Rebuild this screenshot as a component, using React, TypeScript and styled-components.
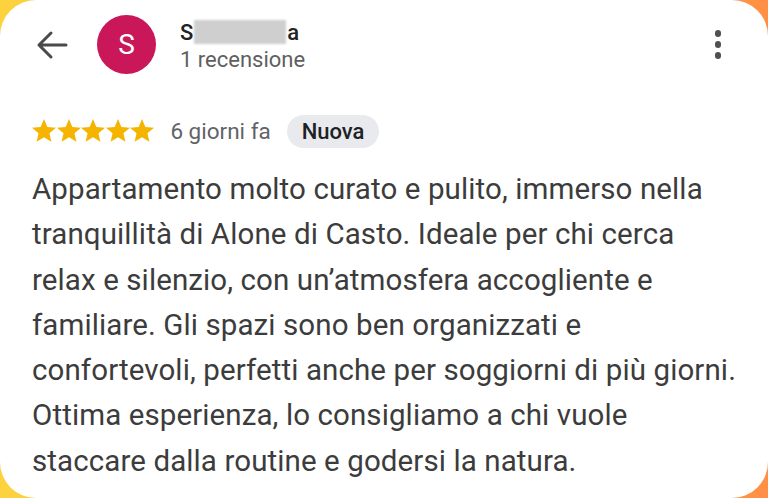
import styled, { createGlobalStyle } from "styled-components";

const GlobalStyle = createGlobalStyle`
  html, body {
    margin: 0;
    padding: 0;
  }
  body {
    width: 768px;
    height: 498px;
    overflow: hidden;
    background: linear-gradient(90deg, #fdd23f 0%, #fdb13f 50%, #ff8f45 100%);
    font-family: Roboto, "Noto Sans", sans-serif;
  }
`;

const Card = styled.div`
  box-sizing: border-box;
  width: 768px;
  height: 498px;
  background: #ffffff;
  border-radius: 36px;
  padding: 15px 32px 0 32px;
  display: flex;
  flex-direction: column;
`;

const Header = styled.div`
  display: flex;
  align-items: center;
  height: 59px;
`;

const BackButton = styled.div`
  width: 32px;
  height: 32px;
  margin-left: 4px;
  display: flex;
  align-items: center;
  justify-content: center;
  color: #4a4a4a;
`;

const Avatar = styled.div`
  width: 59px;
  height: 59px;
  border-radius: 50%;
  background: #c9175a;
  color: #ffffff;
  display: flex;
  align-items: center;
  justify-content: center;
  font-size: 28px;
  margin-left: 29px;
`;

const NameBlock = styled.div`
  display: flex;
  flex-direction: column;
  margin-left: 24px;
  margin-top: 2px;
`;

const NameRow = styled.div`
  display: flex;
  align-items: center;
  font-size: 22px;
  font-weight: 500;
  color: #222222;
  height: 26px;
`;

const Blurred = styled.span`
  display: inline-block;
  width: 92px;
  height: 24px;
  background: #cfcfcf;
  filter: blur(1px);
  margin: 0 1px 0 1px;
`;

const ReviewCount = styled.div`
  font-size: 22px;
  color: #5f5f5f;
  margin-top: 2px;
`;

const Spacer = styled.div`
  flex: 1;
`;

const Kebab = styled.div`
  display: flex;
  flex-direction: column;
  gap: 4.5px;
  margin-right: 15px;
`;

const Dot = styled.span`
  width: 6.5px;
  height: 6.5px;
  border-radius: 50%;
  background: #505050;
`;

const MetaRow = styled.div`
  display: flex;
  align-items: center;
  margin-top: 40px;
  height: 34px;
`;

const Stars = styled.div`
  display: flex;
  gap: 0.6px;
`;

const When = styled.span`
  font-size: 22.5px;
  color: #5f6368;
  margin-left: 16px;
`;

const Chip = styled.span`
  margin-left: 16px;
  height: 33px;
  padding: 0 15px;
  border-radius: 17px;
  background: #e8eaed;
  color: #202124;
  font-size: 22px;
  font-weight: 500;
  display: flex;
  align-items: center;
`;

const Body = styled.p`
  margin: 19px 0 0 0;
  font-size: 29.5px;
  letter-spacing: 0.1px;
  line-height: 45.3px;
  color: #3c3c3c;
`;

function Star() {
  return (
    <svg width="24" height="24" viewBox="2 2 20 20">
      <path
        fill="#f4b400"
        d="M12 17.27L18.18 21l-1.64-7.03L22 9.24l-7.19-.61L12 2 9.19 8.63 2 9.24l5.46 4.73L5.82 21z"
      />
    </svg>
  );
}

export default function App() {
  return (
    <>
      <GlobalStyle />
      <Card>
        <Header>
          <BackButton>
            <svg width="32" height="32" viewBox="0 0 32 32" fill="none">
              <path
                d="M30 16H3M15 4L3 16l12 12"
                stroke="currentColor"
                strokeWidth="3"
                strokeLinecap="round"
                strokeLinejoin="round"
              />
            </svg>
          </BackButton>
          <Avatar>S</Avatar>
          <NameBlock>
            <NameRow>
              S<Blurred />a
            </NameRow>
            <ReviewCount>1 recensione</ReviewCount>
          </NameBlock>
          <Spacer />
          <Kebab>
            <Dot />
            <Dot />
            <Dot />
          </Kebab>
        </Header>
        <MetaRow>
          <Stars>
            {[0, 1, 2, 3, 4].map((i) => (
              <Star key={i} />
            ))}
          </Stars>
          <When>6 giorni fa</When>
          <Chip>Nuova</Chip>
        </MetaRow>
        <Body>
          Appartamento molto curato e pulito, immerso nella
          <br />
          tranquillità di Alone di Casto. Ideale per chi cerca
          <br />
          relax e silenzio, con un’atmosfera accogliente e
          <br />
          familiare. Gli spazi sono ben organizzati e
          <br />
          confortevoli, perfetti anche per soggiorni di più giorni.
          <br />
          Ottima esperienza, lo consigliamo a chi vuole
          <br />
          staccare dalla routine e godersi la natura.
        </Body>
      </Card>
    </>
  );
}
